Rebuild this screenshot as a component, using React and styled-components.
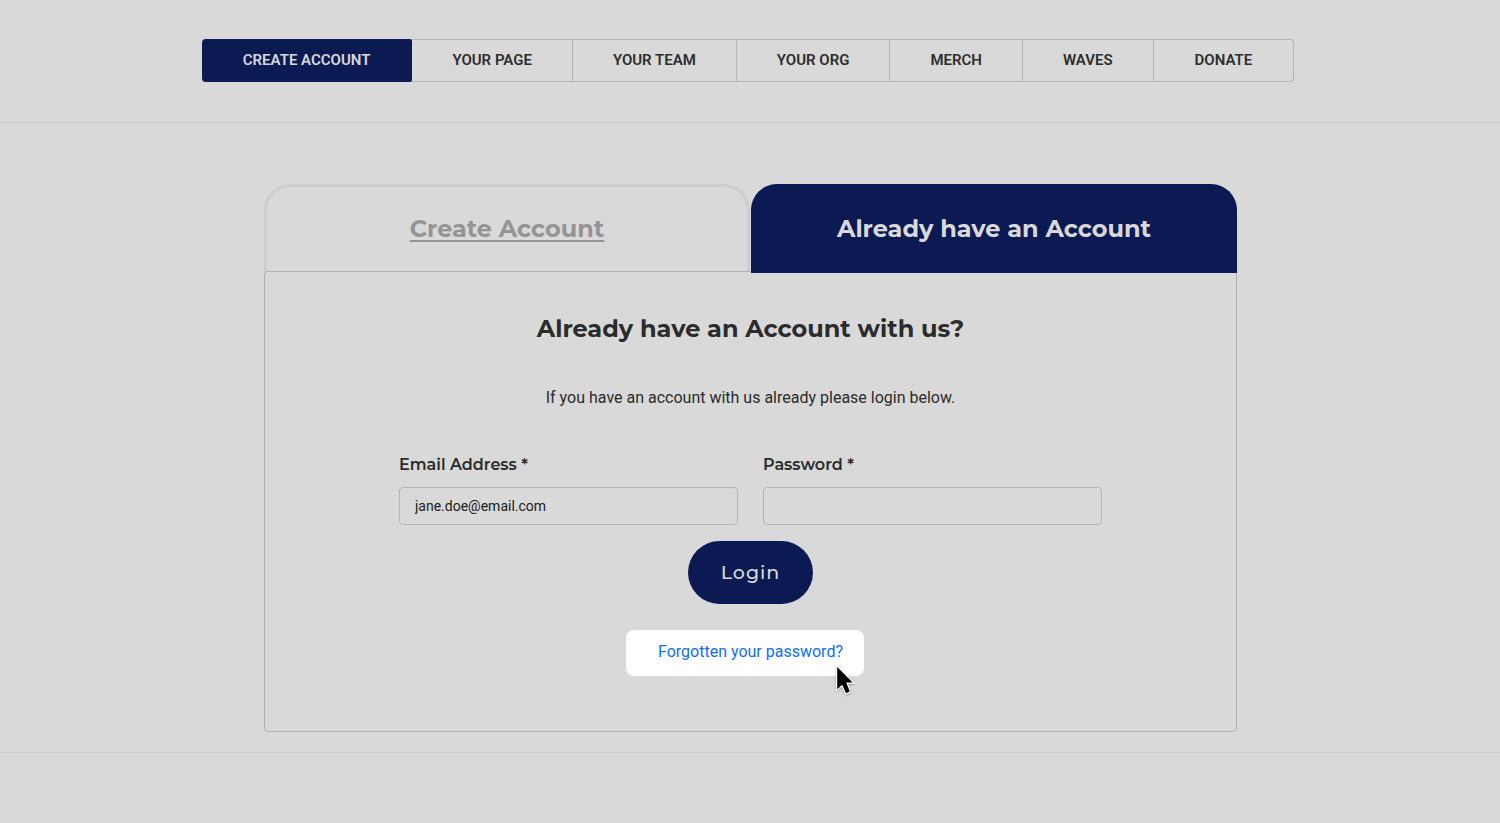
import React from "react";
import styled, { createGlobalStyle, css } from "styled-components";

const heading = `Montserrat, Inter, "Open Sans", sans-serif`;
const navy = "#0c1a54";

const GlobalStyle = createGlobalStyle`
  *, *::before, *::after { box-sizing: border-box; }
  body {
    margin: 0;
    min-height: 100vh;
    background: #d9d9d9;
    color: #2b2b2b;
    font: 400 16px/24px Roboto, sans-serif;
  }
`;

const Header = styled.header`
  display: flex;
  justify-content: center;
  padding: 39px 24px 40px 20px;
  border-bottom: 1px solid #cacaca;
`;

const StepNav = styled.nav`
  display: flex;
  flex-wrap: wrap;
`;

const Step = styled.a`
  padding: 9px 40px;
  border: 1px solid #b3b3b3;
  border-left-width: 0;
  color: #2d2d2d;
  font-size: 15px;
  font-weight: 600;
  line-height: 23px;
  text-decoration: none;
  white-space: nowrap;

  &:last-child {
    padding: 9px 41px;
    border-radius: 0 4px 4px 0;
  }

  ${({ $active }) =>
    $active &&
    css`
      padding: 9px 41px;
      border-color: ${navy};
      border-radius: 4px 2px 2px 4px;
      background: ${navy};
      color: #d9d9d9;
    `}
`;

const Main = styled.main`
  padding: 61px 24px 20px 25px;
  border-bottom: 1px solid #cacaca;
`;

const Account = styled.section`
  max-width: 973px;
  margin: 0 auto;
`;

const Tabs = styled.div`
  display: grid;
  grid-template-columns: 1fr 1fr;
  gap: 1px;
`;

const Tab = styled.button`
  height: 89px;
  margin: 0 0 -2px;
  padding: 0 16px 2px;
  border: 3px solid #cdcdcd;
  border-bottom: 0;
  border-radius: 26px 26px 0 0;
  background: transparent;
  color: #949494;
  font: 700 24px/32px ${heading};
  text-decoration: underline;
  text-decoration-thickness: 2px;
  text-underline-offset: 3px;
  cursor: pointer;

  ${({ $active }) =>
    $active &&
    css`
      position: relative;
      z-index: 1;
      border-color: ${navy};
      background: ${navy};
      color: #d9d9d9;
      text-decoration: none;
    `}
`;

const Panel = styled.div`
  position: relative;
  display: flex;
  flex-direction: column;
  align-items: center;
  padding: 41px 24px 55px;
  border: 1px solid #b0b0b0;
  border-radius: 4px;
  background: #d9d9d9;
`;

const Title = styled.h1`
  margin: 0;
  font: 700 24px/32px ${heading};
  text-align: center;
`;

const Intro = styled.p`
  margin: 41px 0 43px;
  text-align: center;
`;

const LoginForm = styled.form`
  display: flex;
  flex-direction: column;
  align-items: center;
  width: 100%;
  max-width: 703px;
`;

const Fields = styled.div`
  display: grid;
  grid-template-columns: 1fr 1fr;
  gap: 25px;
  width: 100%;
`;

const Field = styled.div`
  display: flex;
  flex-direction: column;
  gap: 10px;
`;

const Label = styled.label`
  font: 600 16px/24px ${heading};
`;

const Input = styled.input`
  width: 100%;
  height: 38px;
  padding: 0 15px;
  border: 1px solid #b3b3b3;
  border-radius: 4px;
  background: transparent;
  color: #202020;
  font: 400 14px/20px Roboto, sans-serif;
`;

const LoginButton = styled.button`
  min-width: 125px;
  margin: 16px 0 26px;
  padding: 16px 32px;
  border: 0;
  border-radius: 32px;
  background: ${navy};
  color: #d9d9d9;
  font: 500 19px/31px ${heading};
  letter-spacing: 1px;
  cursor: pointer;
`;

const ForgottenLink = styled.a`
  position: relative;
  margin-right: 11px;
  padding: 10px 21px 12px 32px;
  border-radius: 8px;
  background: #fff;
  color: #0d6efd;
  text-decoration: none;
`;

const Pointer = styled.svg`
  position: absolute;
  right: 4px;
  bottom: -22px;
  width: 28px;
  height: 36px;
  filter: drop-shadow(0 1px 1px rgba(0, 0, 0, 0.3));
  pointer-events: none;
`;

const steps = ["CREATE ACCOUNT", "YOUR PAGE", "YOUR TEAM", "YOUR ORG", "MERCH", "WAVES", "DONATE"];

export default function App() {
  return (
    <>
      <GlobalStyle />
      <Header>
        <StepNav aria-label="Steps">
          {steps.map((step, i) => (
            <Step key={step} href="#" $active={i === 0}>
              {step}
            </Step>
          ))}
        </StepNav>
      </Header>
      <Main>
        <Account>
          <Tabs>
            <Tab type="button">Create Account</Tab>
            <Tab type="button" $active>Already have an Account</Tab>
          </Tabs>
          <Panel>
            <Title>Already have an Account with us?</Title>
            <Intro>If you have an account with us already please login below.</Intro>
            <LoginForm onSubmit={(e) => e.preventDefault()}>
              <Fields>
                <Field>
                  <Label htmlFor="email">Email Address *</Label>
                  <Input id="email" type="email" defaultValue="jane.doe@email.com" />
                </Field>
                <Field>
                  <Label htmlFor="password">Password *</Label>
                  <Input id="password" type="password" />
                </Field>
              </Fields>
              <LoginButton type="submit">Login</LoginButton>
              <ForgottenLink href="#">
                Forgotten your password?
                <Pointer viewBox="0 0 28 36" aria-hidden="true">
                  <path
                    d="M5.2 5V27.2L10.2 22.8L14 31.2L17.8 29.6L14.2 20.6H20.6Z"
                    fill="#000"
                    stroke="#fff"
                    strokeWidth="2.4"
                    strokeLinejoin="miter"
                    paintOrder="stroke"
                  />
                </Pointer>
              </ForgottenLink>
            </LoginForm>
          </Panel>
        </Account>
      </Main>
    </>
  );
}
